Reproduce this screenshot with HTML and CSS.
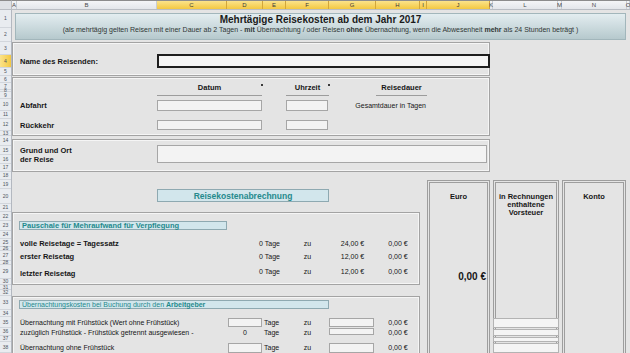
FILE: index.html
```html
<!DOCTYPE html>
<html>

<head>
    <title>Mehrtägige Reisekosten</title>
    <link rel="stylesheet" href="styles.css">
</head>

<body>
    <div class="excel">
        <div class="corner"></div>

        <!-- column letters -->
        <div class="col-heads">
            <div>A</div>
            <div>B</div>
            <div class="sel">C</div>
            <div class="sel">D</div>
            <div class="sel">E</div>
            <div class="sel">F</div>
            <div class="sel">G</div>
            <div class="sel">H</div>
            <div class="sel">I</div>
            <div class="sel">J</div>
            <div>K</div>
            <div>L</div>
            <div>M</div>
            <div>N</div>
            <div>O</div>
        </div>

        <!-- row numbers -->
        <div class="row-heads">
            <div>1</div><div>2</div><div>3</div><div class="sel">4</div><div>5</div>
            <div>6</div><div>7</div><div>8</div><div>9</div><div>10</div>
            <div>11</div><div>12</div><div>13</div><div>14</div><div>15</div>
            <div>16</div><div>17</div><div>18</div><div>19</div><div>20</div>
            <div>21</div><div>22</div><div>23</div><div>24</div><div>25</div>
            <div>26</div><div>27</div><div>28</div><div>29</div><div>30</div>
            <div>31</div><div>32</div><div>33</div><div>34</div><div>35</div>
            <div>36</div><div>37</div><div>38</div>
        </div>

        <div class="sheet">
            <!-- Title -->
            <div class="banner">
                <div class="title">Mehrtägige Reisekosten ab dem Jahr 2017</div>
                <div class="subtitle">(als mehrtägig gelten Reisen mit einer Dauer ab 2 Tagen - <b>mit</b> Übernachtung / oder Reisen <b>ohne</b> Übernachtung, wenn die Abwesenheit <b>mehr</b> als 24 Stunden beträgt )</div>
            </div>

            <!-- Reisedaten -->
            <div class="panel panel-name"></div>
            <div class="panel panel-dates"></div>
            <div class="panel panel-reason"></div>

            <div class="cell bold r4 col-label">Name des Reisenden:</div>
            <div class="name-input"></div>

            <div class="colhead head-date">Datum<span class="tick"></span></div>
            <div class="colhead head-time">Uhrzeit<span class="tick"></span></div>
            <div class="colhead head-duration">Reisedauer</div>

            <div class="cell bold r10 col-label">Abfahrt</div>
            <div class="field r10 field-date"></div>
            <div class="field r10 field-time"></div>
            <div class="cell r10 duration-note">Gesamtdauer in Tagen</div>

            <div class="cell bold r12 col-label">Rückkehr</div>
            <div class="field r12 field-date"></div>
            <div class="field r12 field-time"></div>

            <div class="cell bold reason-label">Grund und Ort<br>der Reise</div>
            <div class="field reason-input"></div>

            <div class="section-button">Reisekostenabrechnung</div>

            <!-- Summenspalten -->
            <div class="total-box box-euro">Euro</div>
            <div class="total-box box-tax">in Rechnungen<br>enthaltene<br>Vorsteuer</div>
            <div class="total-box box-account">Konto</div>
            <div class="cell euro-value">0,00 €</div>
            <div class="tax-line r35"></div>
            <div class="tax-line r36"></div>
            <div class="tax-line r37"></div>
            <div class="tax-line r38"></div>

            <!-- Verpflegung -->
            <div class="panel panel-meals"></div>
            <div class="group-head meals-head">Pauschale für Mehraufwand für Verpflegung</div>

            <div class="cell bold r25 col-label">volle Reisetage = Tagessatz</div>
            <div class="cell r25 col-days">0 Tage</div>
            <div class="cell r25 col-zu">zu</div>
            <div class="cell r25 col-rate">24,00 €</div>
            <div class="cell r25 col-sum">0,00 €</div>

            <div class="cell bold r27 col-label">erster Reisetag</div>
            <div class="cell r27 col-days">0 Tage</div>
            <div class="cell r27 col-zu">zu</div>
            <div class="cell r27 col-rate">12,00 €</div>
            <div class="cell r27 col-sum">0,00 €</div>

            <div class="cell bold r29 col-label low">letzter Reisetag</div>
            <div class="cell r29 col-days high">0 Tage</div>
            <div class="cell r29 col-zu high">zu</div>
            <div class="cell r29 col-rate high">12,00 €</div>
            <div class="cell r29 col-sum high">0,00 €</div>

            <!-- Übernachtung -->
            <div class="panel panel-hotel"></div>
            <div class="group-head hotel-head">Übernachtungskosten bei Buchung durch den&nbsp;<b>Arbeitgeber</b></div>

            <div class="cell r35 col-label">Übernachtung mit Frühstück (Wert ohne Frühstück)</div>
            <div class="field r35 field-days"></div>
            <div class="cell r35 col-unit">Tage</div>
            <div class="cell r35 col-zu">zu</div>
            <div class="field r35 field-rate"></div>
            <div class="cell r35 col-sum">0,00 €</div>

            <div class="cell r36 col-label">zuzüglich Frühstück - Frühstück getrennt ausgewiesen -</div>
            <div class="cell r36 col-count">0</div>
            <div class="cell r36 col-unit">Tage</div>
            <div class="cell r36 col-zu">zu</div>
            <div class="field r36 field-rate"></div>
            <div class="cell r36 col-sum">0,00 €</div>

            <div class="cell r38 col-label">Übernachtung ohne Frühstück</div>
            <div class="field r38 field-days"></div>
            <div class="cell r38 col-unit">Tage</div>
            <div class="cell r38 col-zu">zu</div>
            <div class="field r38 field-rate"></div>
            <div class="cell r38 col-sum">0,00 €</div>
        </div>
    </div>
</body>

</html>
```

FILE: styles.css
```css
body {
    margin: 0;
    font-family: "Liberation Sans", Arial, sans-serif;
    color: #161616;
    background-color: #e4e4e4;
}

.excel {
    width: 630px;
    height: 353px;
    overflow: hidden;
    display: grid;
    grid-template-columns: 12px 618px;
    grid-template-rows: 10px 343px;
    background-color: #e4e4e4;
}

/* headers */

.corner {
    background-color: #dfe2e6;
    border-top: 1px solid #8c8c8c;
    border-right: 1px solid #b9bdc3;
    border-bottom: 1px solid #b9bdc3;
}

.col-heads {
    display: grid;
    grid-template-columns: 5px 140px 70px 36px 23px 43px 47px 44px 7px 63px 3px 65px 4px 65px 3px;
    background: linear-gradient(#f4f5f7, #e3e6ea);
    border-top: 1px solid #8c8c8c;
    border-bottom: 1px solid #b9bdc3;
}

.col-heads div {
    display: flex;
    justify-content: center;
    align-items: center;
    font-size: 6px;
    color: #4a4a4a;
    border-right: 1px solid #c9cdd3;
    white-space: nowrap;
}

.col-heads .sel {
    background: linear-gradient(#fbe38a, #f3c842);
    border-right-color: #d3a63a;
    color: #3a3a3a;
}

.row-heads {
    display: grid;
    grid-template-rows: 18px 14px 13px 13px 8px 7px 7px 2px 7px 12px 8px 12px 5px 10px 9px 9px 8px 8px 9px 15px 8px 9px 10px 8px 8px 4px 10px 4px 14px 6px 5px 6px 14px 7px 11px 8px 6px 11px;
    background-color: #e9ecf0;
    border-right: 1px solid #b3b8c0;
}

.row-heads div {
    display: flex;
    justify-content: center;
    align-items: center;
    font-size: 5px;
    line-height: 5px;
    color: #4e5560;
    border-bottom: 1px solid #d2d6dc;
}

.row-heads .sel {
    background: linear-gradient(90deg, #fbe38a, #f3c842);
}

/* sheet */

.sheet {
    display: grid;
    grid-template-columns: [a] 5px [b] 140px [c] 70px [d] 36px [e] 23px [f] 43px [g] 47px [h] 44px [i] 7px [j] 63px [k] 3px [l] 65px [m] 4px [n] 65px [o] 3px [end];
    grid-template-rows: 18px 14px 13px 13px 8px 7px 7px 2px 7px 12px 8px 12px 5px 10px 9px 9px 8px 8px 9px 15px 8px 9px 10px 8px 8px 4px 10px 4px 14px 6px 5px 6px 14px 7px 11px 8px 6px 11px;
    font-size: 7px;
}

.cell {
    display: flex;
    align-items: center;
    white-space: nowrap;
}

.bold {
    font-weight: bold;
    font-size: 7.5px;
}

.r4 { grid-row: 4; }
.r10 { grid-row: 10; }
.r12 { grid-row: 12; }
.r25 { grid-row: 25; }
.r27 { grid-row: 27; }
.r29 { grid-row: 29; }
.r35 { grid-row: 35; }
.r36 { grid-row: 36; }
.r37 { grid-row: 37; }
.r38 { grid-row: 38; }

.low { padding-top: 3px; }
.high { padding-bottom: 2px; }

.banner {
    grid-row: 1 / 3;
    grid-column: a / end;
    margin: 3px 4px 2px 3px;
    display: flex;
    flex-direction: column;
    align-items: center;
    background: linear-gradient(#e3edf0, #b6c9cd);
    border: 1px solid #a2b6bb;
}

.title {
    font-size: 10px;
    font-weight: bold;
    line-height: 11px;
    color: #1b1b1b;
}

.subtitle {
    font-size: 7px;
    line-height: 10px;
    color: #303636;
}

.panel {
    grid-column: a / k;
    border: 1px solid #a3a3a3;
    box-shadow: inset 1px 1px 0 #f5f5f5, inset -1px -1px 0 #f5f5f5;
}

.panel-name { grid-row: 3 / 6; }
.panel-dates { grid-row: 6 / 14; margin-top: 1px; }
.panel-reason { grid-row: 14 / 18; margin-top: 3px; }
.panel-meals { grid-column: a / i; grid-row: 22 / 31; }
.panel-hotel { grid-column: a / i; grid-row: 33 / 39; margin-bottom: -4px; }

.col-label {
    grid-column: b / c;
    padding-left: 3px;
}

.name-input {
    grid-row: 4;
    grid-column: c / k;
    margin-top: -1px;
    border: 2px solid #1d1d1d;
    background-color: #f4f4f4;
}

.colhead {
    position: relative;
    grid-row: 7 / 10;
    height: 12px;
    line-height: 10px;
    text-align: center;
    font-size: 7.5px;
    font-weight: bold;
    border-bottom: 1px solid #9c9c9c;
}

.head-date { grid-column: c / e; margin-right: 1px; }
.head-time { grid-column: f / g; }
.head-duration { grid-column: h / j; }

.tick {
    position: absolute;
    top: 1px;
    right: -1px;
    width: 2px;
    height: 2px;
    background-color: #3a3a3a;
}

.field {
    background-color: #f3f3f3;
    border: 1px solid #a6a6a6;
}

.field-date { grid-column: c / e; margin: 1px 1px 0 0; }
.field-time { grid-column: f / g; margin: 1px 1px 0 0; }
.r12.field { margin-bottom: 1px; }

.duration-note {
    grid-column: g / j;
    justify-content: flex-end;
    padding-right: 1px;
}

.reason-label {
    grid-row: 15 / 17;
    grid-column: b / c;
    padding-left: 3px;
    line-height: 9px;
    white-space: normal;
}

.reason-input {
    grid-row: 15 / 17;
    grid-column: c / k;
    margin: -1px 3px 1px 0;
}

.section-button {
    grid-row: 20;
    grid-column: c / g;
    margin-bottom: 2px;
    display: flex;
    justify-content: center;
    align-items: center;
    font-size: 8.5px;
    font-weight: bold;
    color: #258a8c;
    background-color: #d2e6ec;
    border: 1px solid #8ea9b1;
}

.total-box {
    grid-row: 19 / 39;
    padding-top: 10px;
    margin-bottom: -4px;
    text-align: center;
    font-size: 7.5px;
    font-weight: bold;
    line-height: 8px;
    border: 3px double #9d9d9d;
}

.box-euro { grid-column: j / k; }
.box-tax { grid-column: l / n; margin-right: 3px; }
.box-account { grid-column: n / o; margin-right: 1px; }

.euro-value {
    grid-row: 29 / 31;
    grid-column: j / k;
    justify-content: flex-end;
    padding-right: 4px;
    padding-top: 3px;
    font-size: 10px;
    font-weight: bold;
}

.tax-line {
    grid-column: l / n;
    margin: 1px 3px 0 0;
    background-color: #f4f4f4;
    border: 1px solid #b3b3b3;
}

.group-head {
    display: flex;
    align-items: center;
    padding-left: 2px;
    white-space: nowrap;
    color: #1f8a8c;
    background-color: #d2e6ec;
    border: 1px solid #8ea9b1;
}

.meals-head {
    grid-row: 23;
    grid-column: b / d;
    margin: 0 0 1px 2px;
    font-size: 7.5px;
    font-weight: bold;
}

.hotel-head {
    grid-row: 33;
    grid-column: b / g;
    margin: 4px 0 1px 2px;
    font-size: 7px;
}

.col-days {
    grid-column: d / f;
    justify-content: flex-end;
    padding-right: 6px;
}

.col-count {
    grid-column: d / e;
    justify-content: center;
}

.col-unit {
    grid-column: e / f;
    padding-left: 1px;
}

.col-zu {
    grid-column: f / g;
    justify-content: center;
}

.col-rate {
    grid-column: g / h;
    justify-content: center;
}

.col-sum {
    grid-column: h / i;
    justify-content: center;
}

.field-days { grid-column: d / e; margin: 1px 1px 1px 1px; }
.field-rate { grid-column: g / h; margin: 1px 2px 1px 0; }
.r36.field-rate { margin-top: 0; }
.r38.field-rate, .r38.field-days { margin-bottom: 0; }
```
